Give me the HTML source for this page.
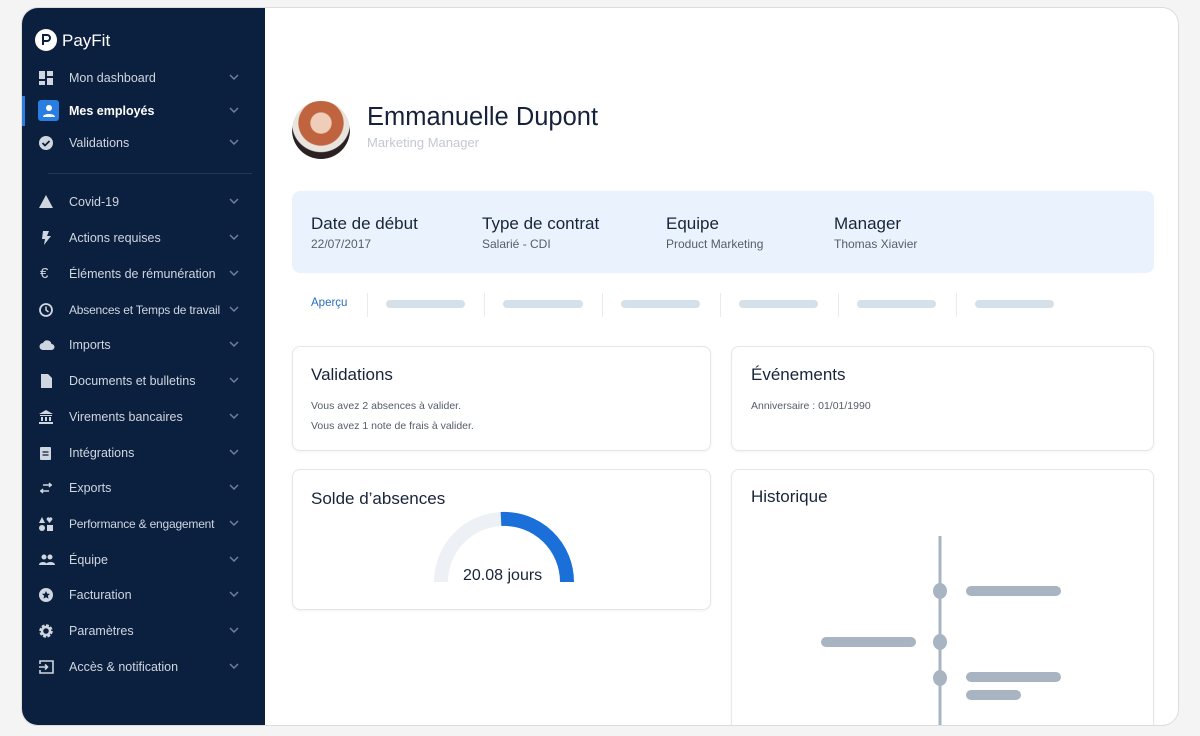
<!DOCTYPE html>
<html><head><meta charset="utf-8"><style>
*{margin:0;padding:0;box-sizing:border-box}
body{width:1200px;height:736px;overflow:hidden;background:#f4f4f4;font-family:"Liberation Sans",sans-serif;position:relative}
.frame{position:absolute;left:22px;top:8px;width:1156px;height:717px;background:#fff;border-radius:16px;overflow:hidden;box-shadow:0 0 0 1px #dcdcdc}
.side{position:absolute;left:0;top:0;width:243px;height:717px;background:#0b1f3e}
.it{position:absolute;left:0;width:243px;height:24px;color:#cfd6e0;font-size:12.5px;line-height:24px}
.it .t{position:absolute;left:47px}
.it svg.i{position:absolute;left:17px;top:5px}
.it .ch{position:absolute;left:207px;top:8px}
.a{position:absolute}
.card{position:absolute;border:1px solid #e3e6ea;border-radius:8px;background:#fff;box-shadow:0 1px 3px rgba(0,0,0,.05)}
.h{font-size:17px;color:#18243a}
.ct{font-size:17px;color:#18243a}
.s{font-size:12px;color:#555d69}
.s2{font-size:10.5px;color:#555d69}
.bar{position:absolute;height:8px;border-radius:4px;background:#d4e0ea;top:292px}
.sep{position:absolute;width:1px;top:285px;height:24px;background:#e8ecf0}
</style></head><body>
<div class="frame">
<div class="side">
 <div class="a" style="left:13px;top:21px;width:22px;height:22px;border-radius:50%;background:#fff"></div>
 <svg class="a" style="left:13px;top:21px" width="22" height="22" viewBox="0 0 22 22"><path d="M8 16V6h4a3 3 0 0 1 0 6H8" fill="none" stroke="#0b1f3e" stroke-width="2"/></svg>
 <div class="a" style="left:40px;top:23px;color:#fff;font-size:17px">PayFit</div>
 <div class="a" style="left:0;top:88px;width:3px;height:30px;background:#2a7de1"></div>
 <div class="a" style="left:26px;top:165px;width:204px;height:1px;background:#22375a"></div>
</div>

<!-- header -->
<div class="a" style="left:270px;top:93px;width:58px;height:58px;border-radius:50%;background:radial-gradient(circle at 50% 38%,#f0cdb8 0 22%,#c0643f 24% 48%,#e9e4de 50% 62%,#2a2222 64%);"></div>
<div class="a" style="left:345px;top:95px;font-size:25.5px;color:#16223a">Emmanuelle Dupont</div>
<div class="a" style="left:345px;top:127px;font-size:13px;color:#c3c8cf">Marketing Manager</div>

<div class="a" style="left:270px;top:183px;width:862px;height:82px;background:#eaf3fd;border-radius:8px"></div>
<div class="a h" style="left:289px;top:206px">Date de début</div><div class="a s" style="left:289px;top:229px">22/07/2017</div>
<div class="a h" style="left:460px;top:206px">Type de contrat</div><div class="a s" style="left:460px;top:229px">Salarié - CDI</div>
<div class="a h" style="left:644px;top:206px">Equipe</div><div class="a s" style="left:644px;top:229px">Product Marketing</div>
<div class="a h" style="left:812px;top:206px">Manager</div><div class="a s" style="left:812px;top:229px">Thomas Xiavier</div>

<div class="a" style="left:289px;top:289px;font-size:11.5px;color:#2b6cc4">Aperçu</div>
<div class="sep" style="left:345px"></div><div class="bar" style="left:364px;width:79px"></div>
<div class="sep" style="left:462px"></div><div class="bar" style="left:481px;width:80px"></div>
<div class="sep" style="left:580px"></div><div class="bar" style="left:599px;width:79px"></div>
<div class="sep" style="left:698px"></div><div class="bar" style="left:717px;width:79px"></div>
<div class="sep" style="left:816px"></div><div class="bar" style="left:835px;width:79px"></div>
<div class="sep" style="left:934px"></div><div class="bar" style="left:953px;width:79px"></div>

<div class="card" style="left:270px;top:338px;width:419px;height:105px">
 <div class="a ct" style="left:18px;top:18px">Validations</div>
 <div class="a s2" style="left:18px;top:53px">Vous avez 2 absences à valider.</div>
 <div class="a s2" style="left:18px;top:73px">Vous avez 1 note de frais à valider.</div>
</div>
<div class="card" style="left:709px;top:338px;width:423px;height:105px">
 <div class="a ct" style="left:19px;top:18px">Événements</div>
 <div class="a s2" style="left:19px;top:53px">Anniversaire : 01/01/1990</div>
</div>
<div class="card" style="left:270px;top:461px;width:419px;height:141px">
 <div class="a ct" style="left:18px;top:19px">Solde d’absences</div>
 <svg class="a" style="left:0;top:0" width="419" height="141"><path d="M148 112A63 63 0 0 1 211 49" fill="none" stroke="#edf0f4" stroke-width="14"/><path d="M208 49A63 63 0 0 1 274 112" fill="none" stroke="#1a6fd9" stroke-width="14"/></svg>
 <div class="a" style="left:170px;top:97px;font-size:16px;color:#18243a">20.08 jours</div>
</div>
<div class="card" style="left:709px;top:461px;width:423px;height:280px">
 <div class="a ct" style="left:19px;top:17px">Historique</div>
</div>
<svg class="a" style="left:0;top:0" width="1156" height="717">
 <line x1="918" y1="528" x2="918" y2="717" stroke="#a9b4c3" stroke-width="3"/>
 <ellipse cx="918" cy="583" rx="7" ry="8" fill="#a9b4c3"/>
 <ellipse cx="918" cy="634" rx="7" ry="8" fill="#a9b4c3"/>
 <ellipse cx="918" cy="670" rx="7" ry="8" fill="#a9b4c3"/>
 <rect x="944" y="578" width="95" height="10" rx="5" fill="#a9b4c3"/>
 <rect x="799" y="629" width="95" height="10" rx="5" fill="#a9b4c3"/>
 <rect x="944" y="664" width="95" height="10" rx="5" fill="#a9b4c3"/>
 <rect x="944" y="682" width="55" height="10" rx="5" fill="#a9b4c3"/>
</svg>
</div>

<div id="sb" style="position:absolute;left:22px;top:8px">
<div class="it" style="top:58px"><svg class="i" width="14" height="14"><rect x="0" y="0" width="6" height="8" fill="#cfd6e0"/><rect x="8" y="0" width="6" height="5" fill="#cfd6e0"/><rect x="0" y="10" width="6" height="4" fill="#cfd6e0"/><rect x="8" y="7" width="6" height="7" fill="#cfd6e0"/></svg><span class="t">Mon dashboard</span><svg class="ch" width="10" height="6"><path d="M1 1l4 4 4-4" fill="none" stroke="#6f7f98" stroke-width="1.5"/></svg></div>
<div class="it" style="top:91px"><div style="position:absolute;left:16px;top:1px;width:21px;height:21px;background:#2a7de1;border-radius:3px"></div><svg class="i" width="20" height="14" style="left:17px"><circle cx="10" cy="4" r="3" fill="#fff"/><path d="M4 13c0-4 12-4 12 0z" fill="#fff"/></svg><span class="t" style="color:#fff;font-weight:bold">Mes employés</span><svg class="ch" width="10" height="6"><path d="M1 1l4 4 4-4" fill="none" stroke="#6f7f98" stroke-width="1.5"/></svg></div>
<div class="it" style="top:123px"><svg class="i" width="14" height="14"><circle cx="7" cy="7" r="7" fill="#cfd6e0"/><path d="M3.5 7l2.5 2.5 4.5-4.5" fill="none" stroke="#0b1f3e" stroke-width="1.8"/></svg><span class="t">Validations</span><svg class="ch" width="10" height="6"><path d="M1 1l4 4 4-4" fill="none" stroke="#6f7f98" stroke-width="1.5"/></svg></div>
<div class="it" style="top:182px"><svg class="i" width="14" height="14"><path d="M7 0L14 13H0z" fill="#cfd6e0"/></svg><span class="t">Covid-19</span><svg class="ch" width="10" height="6"><path d="M1 1l4 4 4-4" fill="none" stroke="#6f7f98" stroke-width="1.5"/></svg></div>
<div class="it" style="top:218px"><svg class="i" width="14" height="14"><path d="M4 0h6L8 5h4L5 14l1-6H3z" fill="#cfd6e0"/></svg><span class="t">Actions requises</span><svg class="ch" width="10" height="6"><path d="M1 1l4 4 4-4" fill="none" stroke="#6f7f98" stroke-width="1.5"/></svg></div>
<div class="it" style="top:254px"><span style="position:absolute;left:18px;font-size:15px;color:#cfd6e0">€</span><span class="t">Éléments de rémunération</span><svg class="ch" width="10" height="6"><path d="M1 1l4 4 4-4" fill="none" stroke="#6f7f98" stroke-width="1.5"/></svg></div>
<div class="it" style="top:290px"><svg class="i" width="14" height="14"><circle cx="7" cy="7" r="6" fill="none" stroke="#cfd6e0" stroke-width="1.8"/><path d="M7 3.5V7l2.5 2" fill="none" stroke="#cfd6e0" stroke-width="1.5"/></svg><span class="t" style="font-size:12px;letter-spacing:-0.2px">Absences et Temps de travail</span><svg class="ch" width="10" height="6"><path d="M1 1l4 4 4-4" fill="none" stroke="#6f7f98" stroke-width="1.5"/></svg></div>
<div class="it" style="top:325px"><svg class="i" width="16" height="14"><path d="M4 12a3.5 3.5 0 0 1 0-7 4.5 4.5 0 0 1 8.5 1 3 3 0 0 1 0 6z" fill="#cfd6e0"/></svg><span class="t">Imports</span><svg class="ch" width="10" height="6"><path d="M1 1l4 4 4-4" fill="none" stroke="#6f7f98" stroke-width="1.5"/></svg></div>
<div class="it" style="top:361px"><svg class="i" width="14" height="14" style="left:19px"><path d="M0 0h7l4 4v10H0z" fill="#cfd6e0"/></svg><span class="t">Documents et bulletins</span><svg class="ch" width="10" height="6"><path d="M1 1l4 4 4-4" fill="none" stroke="#6f7f98" stroke-width="1.5"/></svg></div>
<div class="it" style="top:397px"><svg class="i" width="14" height="14"><path d="M7 0l7 4H0z M1 5h12v1H1z M2 7h2v4H2z M6 7h2v4H6z M10 7h2v4h-2z M0 12h14v2H0z" fill="#cfd6e0"/></svg><span class="t">Virements bancaires</span><svg class="ch" width="10" height="6"><path d="M1 1l4 4 4-4" fill="none" stroke="#6f7f98" stroke-width="1.5"/></svg></div>
<div class="it" style="top:433px"><svg class="i" width="14" height="14"><rect x="1" y="1" width="11" height="13" rx="1" fill="#cfd6e0"/><path d="M3.5 6h6M3.5 9h6" stroke="#0b1f3e" stroke-width="1.2"/></svg><span class="t">Intégrations</span><svg class="ch" width="10" height="6"><path d="M1 1l4 4 4-4" fill="none" stroke="#6f7f98" stroke-width="1.5"/></svg></div>
<div class="it" style="top:468px"><svg class="i" width="14" height="14"><path d="M4 4h9M10 2l2 2-2 2M10 10H1M4 8l-2 2 2 2" fill="none" stroke="#cfd6e0" stroke-width="1.5"/></svg><span class="t">Exports</span><svg class="ch" width="10" height="6"><path d="M1 1l4 4 4-4" fill="none" stroke="#6f7f98" stroke-width="1.5"/></svg></div>
<div class="it" style="top:504px"><svg class="i" width="14" height="14"><path d="M3 0l3 6H0z" fill="#cfd6e0"/><path d="M10.5 6L8 3a1.5 1.5 0 0 1 2.5-2 1.5 1.5 0 0 1 2.5 2z" fill="#cfd6e0"/><circle cx="3" cy="11" r="3" fill="#cfd6e0"/><rect x="8" y="8" width="6" height="6" fill="#cfd6e0"/></svg><span class="t" style="font-size:12px;letter-spacing:-0.2px">Performance &amp; engagement</span><svg class="ch" width="10" height="6"><path d="M1 1l4 4 4-4" fill="none" stroke="#6f7f98" stroke-width="1.5"/></svg></div>
<div class="it" style="top:540px"><svg class="i" width="16" height="14"><circle cx="5" cy="4" r="2.5" fill="#cfd6e0"/><circle cx="11" cy="4" r="2.5" fill="#cfd6e0"/><path d="M0 12c0-4 8-4 8 0zM7 12c0-4 9-4 9 0z" fill="#cfd6e0"/></svg><span class="t">Équipe</span><svg class="ch" width="10" height="6"><path d="M1 1l4 4 4-4" fill="none" stroke="#6f7f98" stroke-width="1.5"/></svg></div>
<div class="it" style="top:575px"><svg class="i" width="14" height="14"><circle cx="7" cy="7" r="7" fill="#cfd6e0"/><path d="M7 3l1.2 2.6 2.8.3-2.1 1.9.6 2.8L7 9.2 4.5 10.6l.6-2.8L3 5.9l2.8-.3z" fill="#0b1f3e"/></svg><span class="t">Facturation</span><svg class="ch" width="10" height="6"><path d="M1 1l4 4 4-4" fill="none" stroke="#6f7f98" stroke-width="1.5"/></svg></div>
<div class="it" style="top:611px"><svg class="i" width="14" height="14"><circle cx="7" cy="7" r="5" fill="none" stroke="#cfd6e0" stroke-width="3.5" stroke-dasharray="2.6 1.3"/><circle cx="7" cy="7" r="4" fill="none" stroke="#cfd6e0" stroke-width="2.5"/></svg><span class="t">Paramètres</span><svg class="ch" width="10" height="6"><path d="M1 1l4 4 4-4" fill="none" stroke="#6f7f98" stroke-width="1.5"/></svg></div>
<div class="it" style="top:647px"><svg class="i" width="15" height="14"><path d="M1 4V1h13v12H1v-3" fill="none" stroke="#cfd6e0" stroke-width="1.6"/><path d="M0 7h8M6 4.5L8.5 7 6 9.5" fill="none" stroke="#cfd6e0" stroke-width="1.6"/></svg><span class="t">Accès &amp; notification</span><svg class="ch" width="10" height="6"><path d="M1 1l4 4 4-4" fill="none" stroke="#6f7f98" stroke-width="1.5"/></svg></div>
</div>
</body></html>
